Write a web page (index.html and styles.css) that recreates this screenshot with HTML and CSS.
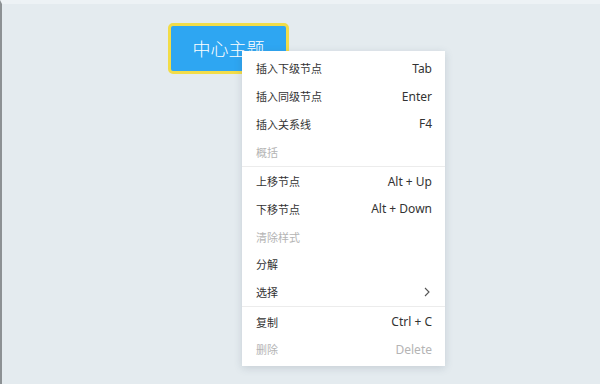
FILE: index.html
```html
<!DOCTYPE html>
<html lang="zh">
<head>
<meta charset="utf-8">
<link rel="stylesheet" href="styles.css">
</head>
<body>
<div class="canvas">
  <div class="topic">中心主题</div>
  <div class="menu">
    <div class="item"><span class="label">插入下级节点</span><span class="key">Tab</span></div>
    <div class="item"><span class="label">插入同级节点</span><span class="key">Enter</span></div>
    <div class="item"><span class="label">插入关系线</span><span class="key">F4</span></div>
    <div class="item disabled"><span class="label">概括</span></div>
    <div class="sep"></div>
    <div class="item"><span class="label">上移节点</span><span class="key">Alt + Up</span></div>
    <div class="item"><span class="label">下移节点</span><span class="key">Alt + Down</span></div>
    <div class="item disabled"><span class="label">清除样式</span></div>
    <div class="item"><span class="label">分解</span></div>
    <div class="item"><span class="label">选择</span>
      <svg class="chev" width="6" height="10" viewBox="0 0 6 10"><path d="M1 1 L5 5 L1 9" fill="none" stroke="#555" stroke-width="1.1"/></svg>
    </div>
    <div class="sep"></div>
    <div class="item"><span class="label">复制</span><span class="key">Ctrl + C</span></div>
    <div class="item disabled"><span class="label">删除</span><span class="key">Delete</span></div>
  </div>
</div>
</body>
</html>
```

FILE: styles.css
```css
html, body {
  margin: 0;
  padding: 0;
}
body {
  width: 600px;
  height: 384px;
  overflow: hidden;
  background: #e4ebef;
  font-family: "Noto Sans", "Noto Sans CJK SC", sans-serif;
}
.canvas {
  position: relative;
  width: 600px;
  height: 384px;
  border-left: 2px solid #8c9194;
  box-sizing: border-box;
  border-top: 4px solid #edf2f5;
}
.topic {
  position: absolute;
  left: 166px;
  top: 19px;
  width: 115px;
  height: 43px;
  border: 3px solid #f2dc48;
  border-radius: 5px;
  background: #2ea6f2;
  color: #fff;
  font-family: "Noto Sans CJK SC", sans-serif;
  font-weight: 300;
  font-size: 18px;
  display: flex;
  align-items: center;
  justify-content: center;
  padding-bottom: 2px;
  box-sizing: content-box;
}
.menu {
  position: absolute;
  left: 240px;
  top: 47px;
  width: 203px;
  box-sizing: border-box;
  background: #fff;
  padding: 3.6px 0 2.4px;
  box-shadow: 0 2px 8px rgba(60, 80, 100, 0.18);
}
.item {
  height: 27.7px;
  display: flex;
  align-items: center;
  justify-content: space-between;
  padding: 0 13px 0 14px;
  color: #333;
}
.label {
  font-family: "Noto Sans CJK SC", sans-serif;
  font-size: 11px;
}
.key {
  font-family: "Noto Sans", sans-serif;
  font-size: 12px;
  color: #333;
}
.disabled .label,
.disabled .key {
  color: #b4b4b4;
}
.chev {
  margin-right: 2px;
}
.sep {
  height: 1px;
  background: #ececec;
  margin: 0.5px 0;
}
```
